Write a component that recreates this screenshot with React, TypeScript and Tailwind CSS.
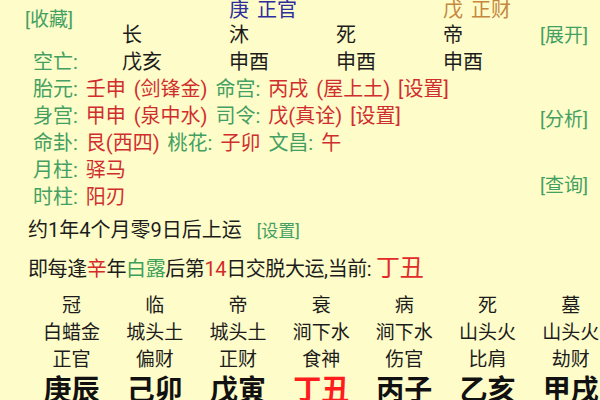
import React from "react";

const G = "text-[#43a062]";
const R = "text-[#d02e2e]";

export default function App() {
  const bottom = [
    ["冠", "白蜡金", "正官", "庚辰", false],
    ["临", "城头土", "偏财", "己卯", false],
    ["帝", "城头土", "正财", "戊寅", false],
    ["衰", "涧下水", "食神", "丁丑", true],
    ["病", "涧下水", "伤官", "丙子", false],
    ["死", "山头火", "比肩", "乙亥", false],
    ["墓", "山头火", "劫财", "甲戌", false],
  ] as const;
  return (
    <div
      className="w-[600px] h-[400px] overflow-hidden bg-[#fefcc9] text-[#1c1c1c]"
      style={{ fontFamily: 'Roboto, "Noto Sans CJK SC", sans-serif' }}
    >
      <div className="flex">
        <div className="w-[540px] text-[20px] [word-spacing:3px]">
          <div className="grid grid-cols-[97px_107px_107px_107px_122px] pl-[25px]">
            <div className={`row-span-2 self-start mt-[9px] leading-[22px] text-[19px] ${G}`}>[收藏]</div>
            <div className="h-[22px] leading-[20px]"></div>
            <div className="h-[22px] leading-[20px] text-[#2d2d9e]">庚 正官</div>
            <div className="h-[22px] leading-[20px]"></div>
            <div className="h-[22px] leading-[20px] text-[#c48740]">戊 正财</div>
            <div className="leading-[27px]">长</div>
            <div className="leading-[27px]">沐</div>
            <div className="leading-[27px]">死</div>
            <div className="leading-[27px]">帝</div>
            <div className={`leading-[27px] pl-[8px] ${G}`}>空亡:</div>
            <div className="leading-[27px]">戊亥</div>
            <div className="leading-[27px]">申酉</div>
            <div className="leading-[27px]">申酉</div>
            <div className="leading-[27px]">申酉</div>
          </div>
          <div className="pl-[33px] leading-[27px] whitespace-nowrap">
            <div>
              <span className={G}>胎元: </span>
              <span className={R}>壬申 (剑锋金) </span>
              <span className={G}>命宫: </span>
              <span className={R}>丙戌 (屋上土) [设置]</span>
            </div>
            <div>
              <span className={G}>身宫: </span>
              <span className={R}>甲申 (泉中水) </span>
              <span className={G}>司令: </span>
              <span className={R}>戊(真诠) [设置]</span>
            </div>
            <div>
              <span className={G}>命卦: </span>
              <span className={R}>艮(西四) </span>
              <span className={G}>桃花: </span>
              <span className={R}>子卯 </span>
              <span className={G}>文昌: </span>
              <span className={R}>午</span>
            </div>
            <div>
              <span className={G}>月柱: </span>
              <span className={R}>驿马</span>
            </div>
            <div>
              <span className={G}>时柱: </span>
              <span className={R}>阳刃</span>
            </div>
          </div>
        </div>
        <div className={`w-[60px] flex flex-col text-[19px] leading-[18px] whitespace-nowrap ${G}`}>
          <div className="mt-[27px]">[展开]</div>
          <div className="mt-[66px]">[分析]</div>
          <div className="mt-[48px]">[查询]</div>
        </div>
      </div>
      <div className="pl-[28px] mt-[3px] whitespace-nowrap text-[20px]">
        <div className="leading-[32px]">
          约1年4个月零9日后上运 <span className={`ml-[10px] text-[17px] ${G}`}>[设置]</span>
        </div>
        <div className="leading-[43px] tracking-[-0.4px]">
          即每逢<span className="text-[#d42a2a]">辛</span>年<span className="text-[#3aa05a]">白露</span>后第<span className="text-[#d42a2a]">14</span>日交脱大运,当前: <span className="text-[24px] tracking-normal text-[#e22a2a]">丁丑</span>
        </div>
      </div>
      <div className="grid grid-cols-[repeat(7,83.2px)] pl-[30px] mt-[2px] text-center text-[19px] whitespace-nowrap">
        {bottom.map(([a, b, c, d, red], i) => (
          <div key={i} className="flex flex-col items-center">
            <div className="leading-[26px]">{a}</div>
            <div className="leading-[27px]">{b}</div>
            <div className="leading-[27px]">{c}</div>
            <div className={`leading-[36px] text-[28px] font-bold ${red ? "text-[#ff1c1c]" : "text-[#111]"}`}>{d}</div>
          </div>
        ))}
      </div>
    </div>
  );
}
